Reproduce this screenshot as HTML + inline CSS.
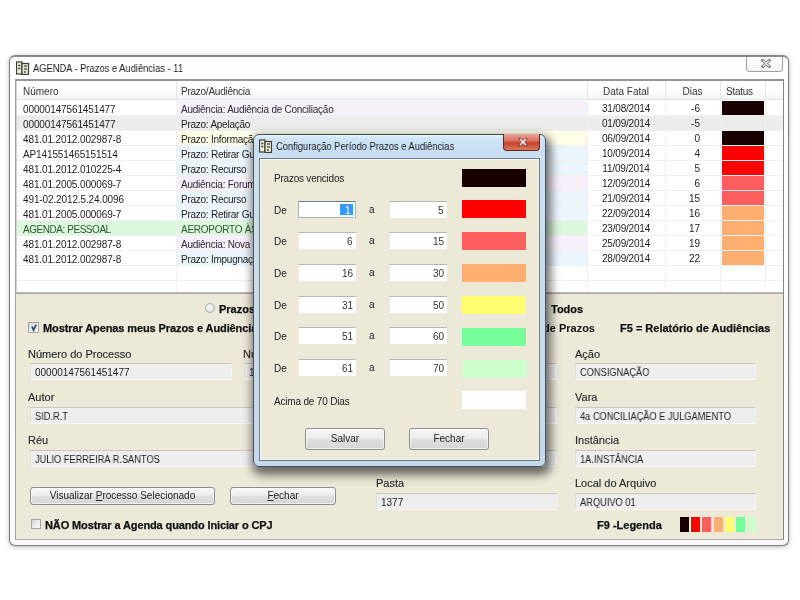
<!DOCTYPE html>
<html><head><meta charset="utf-8"><style>
html,body{margin:0;padding:0;}
body{width:800px;height:600px;overflow:hidden;background:#fff;position:relative;font-family:"Liberation Sans",sans-serif;}
div{position:absolute;box-sizing:border-box;}
.t{white-space:nowrap;will-change:transform;}
</style></head><body>
<div style="left:9px;top:55px;width:780px;height:491px;border:1px solid #7d7d7d;border-top:2px solid #8a8a8a;border-radius:6px;background:linear-gradient(#fdfdfd,#ffffff 30px,#f8f8f8);box-shadow:0 1px 5px rgba(0,0,0,0.28);"></div>
<div style="left:746px;top:57px;width:37px;height:15px;border:1px solid #a0a0a0;border-top:none;border-radius:0 0 4px 4px;background:linear-gradient(#ffffff,#f4f4f4);"><svg style="position:absolute;left:14px;top:2px" width="10" height="9" viewBox="0 0 10 9"><path d="M1.8 1.5 L8.2 7.5 M8.2 1.5 L1.8 7.5" stroke="#6e6e78" stroke-width="2.9" stroke-linecap="square"/><path d="M1.8 1.5 L8.2 7.5 M8.2 1.5 L1.8 7.5" stroke="#f4f4f4" stroke-width="1.1"/></svg></div>
<div style="left:16px;top:61px;width:14px;height:14px;"><svg width="14" height="14" viewBox="0 0 14 14"><rect x="0.5" y="1" width="5.5" height="12" fill="#eef0e4" stroke="#3c3c30" stroke-width="1.2"/><rect x="6" y="2.5" width="6.5" height="11" fill="#e6ead8" stroke="#3c3c30" stroke-width="1.2"/><path d="M2 4.5h2.5M2 7.5h2.5M8 5h3M8 8h3M8 11h2" stroke="#5a5a48" stroke-width="1.3"/></svg></div>
<div class="t" style="left:33px;top:62px;font-size:10.5px;line-height:12.5px;font-weight:normal;color:#1a1a1a;transform:scaleX(0.89);transform-origin:0 0;">AGENDA - Prazos e Audiências - 11</div>
<div style="left:15px;top:79px;width:769px;height:461px;background:#ECE9D8;border-top:2px solid #969696;border-left:1px solid #a0a0a0;border-right:1px solid #858585;border-bottom:1px solid #a8a8a8;"></div>
<div style="left:16px;top:81px;width:767px;height:212px;background:#fff;"></div>
<div style="left:16px;top:81px;width:767px;height:19px;background:linear-gradient(#ffffff,#ffffff 50%,#f3f4f6);border-bottom:1px solid #e3e6ea;"></div>
<div style="left:176px;top:81px;width:1px;height:18px;background:#e4e7eb;"></div>
<div style="left:587px;top:81px;width:1px;height:18px;background:#e4e7eb;"></div>
<div style="left:665px;top:81px;width:1px;height:18px;background:#e4e7eb;"></div>
<div style="left:720px;top:81px;width:1px;height:18px;background:#e4e7eb;"></div>
<div style="left:765px;top:81px;width:1px;height:18px;background:#e4e7eb;"></div>
<div class="t" style="left:23px;top:86px;font-size:10px;line-height:12px;font-weight:normal;color:#333;">Número</div>
<div class="t" style="left:181px;top:86px;font-size:10px;line-height:12px;font-weight:normal;color:#333;letter-spacing:-0.25px;">Prazo/Audiência</div>
<div class="t" style="left:587px;top:86px;width:78px;text-align:center;font-size:10px;line-height:12px;color:#333">Data Fatal</div>
<div class="t" style="left:665px;top:86px;width:55px;text-align:center;font-size:10px;line-height:12px;color:#333">Dias</div>
<div class="t" style="left:726px;top:86px;font-size:10px;line-height:12px;font-weight:normal;color:#333;letter-spacing:-0.25px;">Status</div>
<div style="left:176px;top:101px;width:411px;height:14px;background:#F5F1FB;"></div>
<div style="left:16px;top:115px;width:767px;height:1px;background:#f0f0f0;"></div>
<div class="t" style="left:23px;top:104px;font-size:10px;line-height:12px;font-weight:normal;color:#1e1e1e;letter-spacing:-0.12px;">00000147561451477</div>
<div class="t" style="left:181px;top:104px;font-size:10px;line-height:12px;font-weight:normal;color:#302838;letter-spacing:-0.25px;">Audiência: Audiência de Conciliação</div>
<div class="t" style="left:587px;top:103px;width:78px;text-align:center;font-size:10px;line-height:12px;color:#1e1e1e;letter-spacing:-0.2px">31/08/2014</div>
<div class="t" style="left:640px;top:103px;width:60px;text-align:right;font-size:10px;line-height:12px;color:#1e1e1e">-6</div>
<div style="left:722px;top:101px;width:42px;height:14px;background:#180000;"></div>
<div style="left:16px;top:116px;width:767px;height:14px;background:#ececec;"></div>
<div style="left:16px;top:130px;width:767px;height:1px;background:#f0f0f0;"></div>
<div class="t" style="left:23px;top:119px;font-size:10px;line-height:12px;font-weight:normal;color:#1e1e1e;letter-spacing:-0.12px;">00000147561451477</div>
<div class="t" style="left:181px;top:119px;font-size:10px;line-height:12px;font-weight:normal;color:#1e1e1e;letter-spacing:-0.25px;">Prazo: Apelação</div>
<div class="t" style="left:587px;top:118px;width:78px;text-align:center;font-size:10px;line-height:12px;color:#1e1e1e;letter-spacing:-0.2px">01/09/2014</div>
<div class="t" style="left:640px;top:118px;width:60px;text-align:right;font-size:10px;line-height:12px;color:#1e1e1e">-5</div>
<div style="left:176px;top:131px;width:411px;height:14px;background:#FFFDE8;"></div>
<div style="left:16px;top:145px;width:767px;height:1px;background:#f0f0f0;"></div>
<div class="t" style="left:23px;top:134px;font-size:10px;line-height:12px;font-weight:normal;color:#1e1e1e;letter-spacing:-0.12px;">481.01.2012.002987-8</div>
<div class="t" style="left:181px;top:134px;font-size:10px;line-height:12px;font-weight:normal;color:#1e1e1e;letter-spacing:-0.25px;">Prazo: Informação</div>
<div class="t" style="left:587px;top:133px;width:78px;text-align:center;font-size:10px;line-height:12px;color:#1e1e1e;letter-spacing:-0.2px">06/09/2014</div>
<div class="t" style="left:640px;top:133px;width:60px;text-align:right;font-size:10px;line-height:12px;color:#1e1e1e">0</div>
<div style="left:722px;top:131px;width:42px;height:14px;background:#180000;"></div>
<div style="left:176px;top:146px;width:411px;height:14px;background:#EAF5FC;"></div>
<div style="left:16px;top:160px;width:767px;height:1px;background:#f0f0f0;"></div>
<div class="t" style="left:23px;top:149px;font-size:10px;line-height:12px;font-weight:normal;color:#1e1e1e;letter-spacing:-0.12px;">AP141551465151514</div>
<div class="t" style="left:181px;top:149px;font-size:10px;line-height:12px;font-weight:normal;color:#1e1e1e;letter-spacing:-0.25px;">Prazo: Retirar Guia</div>
<div class="t" style="left:587px;top:148px;width:78px;text-align:center;font-size:10px;line-height:12px;color:#1e1e1e;letter-spacing:-0.2px">10/09/2014</div>
<div class="t" style="left:640px;top:148px;width:60px;text-align:right;font-size:10px;line-height:12px;color:#1e1e1e">4</div>
<div style="left:722px;top:146px;width:42px;height:14px;background:#FF0000;"></div>
<div style="left:176px;top:161px;width:411px;height:14px;background:#EAF5FC;"></div>
<div style="left:16px;top:175px;width:767px;height:1px;background:#f0f0f0;"></div>
<div class="t" style="left:23px;top:164px;font-size:10px;line-height:12px;font-weight:normal;color:#1e1e1e;letter-spacing:-0.12px;">481.01.2012.010225-4</div>
<div class="t" style="left:181px;top:164px;font-size:10px;line-height:12px;font-weight:normal;color:#1e1e1e;letter-spacing:-0.25px;">Prazo: Recurso</div>
<div class="t" style="left:587px;top:163px;width:78px;text-align:center;font-size:10px;line-height:12px;color:#1e1e1e;letter-spacing:-0.2px">11/09/2014</div>
<div class="t" style="left:640px;top:163px;width:60px;text-align:right;font-size:10px;line-height:12px;color:#1e1e1e">5</div>
<div style="left:722px;top:161px;width:42px;height:14px;background:#FF0000;"></div>
<div style="left:176px;top:176px;width:411px;height:14px;background:#F7F0FB;"></div>
<div style="left:16px;top:190px;width:767px;height:1px;background:#f0f0f0;"></div>
<div class="t" style="left:23px;top:179px;font-size:10px;line-height:12px;font-weight:normal;color:#1e1e1e;letter-spacing:-0.12px;">481.01.2005.000069-7</div>
<div class="t" style="left:181px;top:179px;font-size:10px;line-height:12px;font-weight:normal;color:#302838;letter-spacing:-0.25px;">Audiência: Forum</div>
<div class="t" style="left:587px;top:178px;width:78px;text-align:center;font-size:10px;line-height:12px;color:#1e1e1e;letter-spacing:-0.2px">12/09/2014</div>
<div class="t" style="left:640px;top:178px;width:60px;text-align:right;font-size:10px;line-height:12px;color:#1e1e1e">6</div>
<div style="left:722px;top:176px;width:42px;height:14px;background:#FF5E5E;"></div>
<div style="left:176px;top:191px;width:411px;height:14px;background:#EAF5FC;"></div>
<div style="left:16px;top:205px;width:767px;height:1px;background:#f0f0f0;"></div>
<div class="t" style="left:23px;top:194px;font-size:10px;line-height:12px;font-weight:normal;color:#1e1e1e;letter-spacing:-0.12px;">491-02.2012.5.24.0096</div>
<div class="t" style="left:181px;top:194px;font-size:10px;line-height:12px;font-weight:normal;color:#1e1e1e;letter-spacing:-0.25px;">Prazo: Recurso</div>
<div class="t" style="left:587px;top:193px;width:78px;text-align:center;font-size:10px;line-height:12px;color:#1e1e1e;letter-spacing:-0.2px">21/09/2014</div>
<div class="t" style="left:640px;top:193px;width:60px;text-align:right;font-size:10px;line-height:12px;color:#1e1e1e">15</div>
<div style="left:722px;top:191px;width:42px;height:14px;background:#FF5E5E;"></div>
<div style="left:176px;top:206px;width:411px;height:14px;background:#EAF5FC;"></div>
<div style="left:16px;top:220px;width:767px;height:1px;background:#f0f0f0;"></div>
<div class="t" style="left:23px;top:209px;font-size:10px;line-height:12px;font-weight:normal;color:#1e1e1e;letter-spacing:-0.12px;">481.01.2005.000069-7</div>
<div class="t" style="left:181px;top:209px;font-size:10px;line-height:12px;font-weight:normal;color:#1e1e1e;letter-spacing:-0.25px;">Prazo: Retirar Guia</div>
<div class="t" style="left:587px;top:208px;width:78px;text-align:center;font-size:10px;line-height:12px;color:#1e1e1e;letter-spacing:-0.2px">22/09/2014</div>
<div class="t" style="left:640px;top:208px;width:60px;text-align:right;font-size:10px;line-height:12px;color:#1e1e1e">16</div>
<div style="left:722px;top:206px;width:42px;height:14px;background:#FFB070;"></div>
<div style="left:16px;top:221px;width:571px;height:14px;background:#dcf8dc;"></div>
<div style="left:16px;top:235px;width:767px;height:1px;background:#f0f0f0;"></div>
<div class="t" style="left:23px;top:224px;font-size:10px;line-height:12px;font-weight:normal;color:#2f5530;letter-spacing:-0.45px;">AGENDA: PESSOAL</div>
<div class="t" style="left:181px;top:224px;font-size:10px;line-height:12px;font-weight:normal;color:#2f5530;letter-spacing:-0.25px;">AEROPORTO ÀS</div>
<div class="t" style="left:587px;top:223px;width:78px;text-align:center;font-size:10px;line-height:12px;color:#1e1e1e;letter-spacing:-0.2px">23/09/2014</div>
<div class="t" style="left:640px;top:223px;width:60px;text-align:right;font-size:10px;line-height:12px;color:#1e1e1e">17</div>
<div style="left:722px;top:221px;width:42px;height:14px;background:#FFB070;"></div>
<div style="left:176px;top:236px;width:411px;height:14px;background:#F7F0FB;"></div>
<div style="left:16px;top:250px;width:767px;height:1px;background:#f0f0f0;"></div>
<div class="t" style="left:23px;top:239px;font-size:10px;line-height:12px;font-weight:normal;color:#1e1e1e;letter-spacing:-0.12px;">481.01.2012.002987-8</div>
<div class="t" style="left:181px;top:239px;font-size:10px;line-height:12px;font-weight:normal;color:#302838;letter-spacing:-0.25px;">Audiência: Nova</div>
<div class="t" style="left:587px;top:238px;width:78px;text-align:center;font-size:10px;line-height:12px;color:#1e1e1e;letter-spacing:-0.2px">25/09/2014</div>
<div class="t" style="left:640px;top:238px;width:60px;text-align:right;font-size:10px;line-height:12px;color:#1e1e1e">19</div>
<div style="left:722px;top:236px;width:42px;height:14px;background:#FFB070;"></div>
<div style="left:176px;top:251px;width:411px;height:14px;background:#EAF5FC;"></div>
<div style="left:16px;top:265px;width:767px;height:1px;background:#f0f0f0;"></div>
<div class="t" style="left:23px;top:254px;font-size:10px;line-height:12px;font-weight:normal;color:#1e1e1e;letter-spacing:-0.12px;">481.01.2012.002987-8</div>
<div class="t" style="left:181px;top:254px;font-size:10px;line-height:12px;font-weight:normal;color:#1e1e1e;letter-spacing:-0.25px;">Prazo: Impugnação</div>
<div class="t" style="left:587px;top:253px;width:78px;text-align:center;font-size:10px;line-height:12px;color:#1e1e1e;letter-spacing:-0.2px">28/09/2014</div>
<div class="t" style="left:640px;top:253px;width:60px;text-align:right;font-size:10px;line-height:12px;color:#1e1e1e">22</div>
<div style="left:722px;top:251px;width:42px;height:14px;background:#FFB070;"></div>
<div style="left:16px;top:280px;width:767px;height:1px;background:#f0f0f0;"></div>
<div style="left:176px;top:100px;width:1px;height:193px;background:#f0f0f0;"></div>
<div style="left:587px;top:100px;width:1px;height:193px;background:#f0f0f0;"></div>
<div style="left:665px;top:100px;width:1px;height:193px;background:#f0f0f0;"></div>
<div style="left:720px;top:100px;width:1px;height:193px;background:#f0f0f0;"></div>
<div style="left:765px;top:100px;width:1px;height:193px;background:#f0f0f0;"></div>
<div style="left:16px;top:81px;width:1px;height:212px;background:#d4d4d4;"></div>
<div style="left:16px;top:292px;width:767px;height:2px;background:linear-gradient(#c8c8c8,#9a9a9a);"></div>
<div style="left:205px;top:303px;width:10px;height:10px;border-radius:50%;border:1px solid #b0b0b0;background:radial-gradient(circle at 40% 40%,#ffffff,#dcdcdc 70%,#c8c8c8);"></div>
<div class="t" style="left:219px;top:303px;font-size:11px;line-height:13px;font-weight:bold;color:#111;-webkit-text-stroke:0.25px #111;">Prazos</div>
<div class="t" style="left:551px;top:303px;font-size:11px;line-height:13px;font-weight:bold;color:#111;-webkit-text-stroke:0.25px #111;">Todos</div>
<div style="left:28px;top:322px;width:11px;height:11px;border:1px solid #a4a4a4;background:linear-gradient(135deg,#d0d4dc,#eef0f4 60%,#fafafa);"><svg style="position:absolute;left:0px;top:0px" width="9" height="9" viewBox="0 0 9 9"><path d="M3 3.5 L4.6 7.2 L7.2 1.6" stroke="#3a4866" stroke-width="1.7" fill="none"/></svg></div>
<div class="t" style="left:43px;top:322px;font-size:11px;line-height:13px;font-weight:bold;color:#111;-webkit-text-stroke:0.25px #111;letter-spacing:-0.1px;">Mostrar Apenas meus Prazos e Audiências</div>
<div class="t" style="left:395px;top:322px;width:200px;text-align:right;font-size:11px;line-height:13px;font-weight:bold;color:#111">F4 = Relatório de Prazos</div>
<div class="t" style="left:620px;top:322px;font-size:11px;line-height:13px;font-weight:bold;color:#111;-webkit-text-stroke:0.25px #111;">F5 = Relatório de Audiências</div>
<div class="t" style="left:28px;top:348px;font-size:11px;line-height:13px;font-weight:normal;color:#2a2a2a;-webkit-text-stroke:0.15px #2a2a2a;">Número do Processo</div>
<div class="t" style="left:243px;top:348px;font-size:11px;line-height:13px;font-weight:normal;color:#2a2a2a;-webkit-text-stroke:0.15px #2a2a2a;">Número</div>
<div class="t" style="left:575px;top:348px;font-size:11px;line-height:13px;font-weight:normal;color:#2a2a2a;-webkit-text-stroke:0.15px #2a2a2a;">Ação</div>
<div style="left:30px;top:363px;width:202px;height:17px;background:#EEEEEE;border-top:1px solid #c9c7bc;border-left:1px solid #e2e0d6;border-bottom:1px solid #f8f8f4;border-right:1px solid #f4f4f0;"><div class="t" style="left:4px;top:3px;font-size:10px;line-height:12px;color:#222;letter-spacing:0;">00000147561451477</div></div>
<div style="left:244px;top:363px;width:313px;height:17px;background:#EEEEEE;border-top:1px solid #c9c7bc;border-left:1px solid #e2e0d6;border-bottom:1px solid #f8f8f4;border-right:1px solid #f4f4f0;"><div class="t" style="left:4px;top:3px;font-size:10px;line-height:12px;color:#222;letter-spacing:0;">1</div></div>
<div style="left:575px;top:363px;width:181px;height:17px;background:#EEEEEE;border-top:1px solid #c9c7bc;border-left:1px solid #e2e0d6;border-bottom:1px solid #f8f8f4;border-right:1px solid #f4f4f0;"><div class="t" style="left:4px;top:3px;font-size:10px;line-height:12px;color:#222;letter-spacing:0;transform:scaleX(0.925);transform-origin:0 0;">CONSIGNAÇÃO</div></div>
<div class="t" style="left:28px;top:391px;font-size:11px;line-height:13px;font-weight:normal;color:#2a2a2a;-webkit-text-stroke:0.15px #2a2a2a;">Autor</div>
<div class="t" style="left:575px;top:391px;font-size:11px;line-height:13px;font-weight:normal;color:#2a2a2a;-webkit-text-stroke:0.15px #2a2a2a;">Vara</div>
<div style="left:30px;top:407px;width:527px;height:17px;background:#EEEEEE;border-top:1px solid #c9c7bc;border-left:1px solid #e2e0d6;border-bottom:1px solid #f8f8f4;border-right:1px solid #f4f4f0;"><div class="t" style="left:4px;top:3px;font-size:10px;line-height:12px;color:#222;letter-spacing:0;transform:scaleX(0.925);transform-origin:0 0;">SID.R.T</div></div>
<div style="left:575px;top:407px;width:181px;height:17px;background:#EEEEEE;border-top:1px solid #c9c7bc;border-left:1px solid #e2e0d6;border-bottom:1px solid #f8f8f4;border-right:1px solid #f4f4f0;"><div class="t" style="left:4px;top:3px;font-size:10px;line-height:12px;color:#222;letter-spacing:0;transform:scaleX(0.925);transform-origin:0 0;">4a CONCILIAÇÃO E JULGAMENTO</div></div>
<div class="t" style="left:28px;top:434px;font-size:11px;line-height:13px;font-weight:normal;color:#2a2a2a;-webkit-text-stroke:0.15px #2a2a2a;">Réu</div>
<div class="t" style="left:575px;top:434px;font-size:11px;line-height:13px;font-weight:normal;color:#2a2a2a;-webkit-text-stroke:0.15px #2a2a2a;">Instância</div>
<div style="left:30px;top:450px;width:527px;height:17px;background:#EEEEEE;border-top:1px solid #c9c7bc;border-left:1px solid #e2e0d6;border-bottom:1px solid #f8f8f4;border-right:1px solid #f4f4f0;"><div class="t" style="left:4px;top:3px;font-size:10px;line-height:12px;color:#222;letter-spacing:0;transform:scaleX(0.925);transform-origin:0 0;">JULIO FERREIRA R.SANTOS</div></div>
<div style="left:575px;top:450px;width:181px;height:17px;background:#EEEEEE;border-top:1px solid #c9c7bc;border-left:1px solid #e2e0d6;border-bottom:1px solid #f8f8f4;border-right:1px solid #f4f4f0;"><div class="t" style="left:4px;top:3px;font-size:10px;line-height:12px;color:#222;letter-spacing:0;transform:scaleX(0.925);transform-origin:0 0;">1A.INSTÂNCIA</div></div>
<div class="t" style="left:376px;top:477px;font-size:11px;line-height:13px;font-weight:normal;color:#2a2a2a;-webkit-text-stroke:0.15px #2a2a2a;">Pasta</div>
<div class="t" style="left:575px;top:477px;font-size:11px;line-height:13px;font-weight:normal;color:#2a2a2a;-webkit-text-stroke:0.15px #2a2a2a;">Local do Arquivo</div>
<div style="left:376px;top:493px;width:182px;height:17px;background:#EEEEEE;border-top:1px solid #c9c7bc;border-left:1px solid #e2e0d6;border-bottom:1px solid #f8f8f4;border-right:1px solid #f4f4f0;"><div class="t" style="left:4px;top:3px;font-size:10px;line-height:12px;color:#222;letter-spacing:0;">1377</div></div>
<div style="left:575px;top:493px;width:181px;height:17px;background:#EEEEEE;border-top:1px solid #c9c7bc;border-left:1px solid #e2e0d6;border-bottom:1px solid #f8f8f4;border-right:1px solid #f4f4f0;"><div class="t" style="left:4px;top:3px;font-size:10px;line-height:12px;color:#222;letter-spacing:0;transform:scaleX(0.925);transform-origin:0 0;">ARQUIVO 01</div></div>
<div style="left:30px;top:487px;width:185px;height:18px;border:1px solid #8e8f8f;border-radius:3px;background:linear-gradient(#f7f7f7,#ececec 45%,#dedede 55%,#d6d6d6);box-shadow:inset 0 0 0 1px rgba(255,255,255,0.6);"><div class="t" style="left:0;top:0;width:100%;height:100%;text-align:center;font-size:10px;line-height:16px;color:#222">Visualizar <u>P</u>rocesso Selecionado</div></div>
<div style="left:230px;top:487px;width:106px;height:18px;border:1px solid #8e8f8f;border-radius:3px;background:linear-gradient(#f7f7f7,#ececec 45%,#dedede 55%,#d6d6d6);box-shadow:inset 0 0 0 1px rgba(255,255,255,0.6);"><div class="t" style="left:0;top:0;width:100%;height:100%;text-align:center;font-size:10px;line-height:16px;color:#222"><u>F</u>echar</div></div>
<div style="left:31px;top:519px;width:10px;height:10px;border:1px solid #a4a4a4;background:linear-gradient(135deg,#d0d4dc,#eef0f4 60%,#fafafa);"></div>
<div class="t" style="left:45px;top:519px;font-size:11px;line-height:13px;font-weight:bold;color:#111;-webkit-text-stroke:0.25px #111;letter-spacing:-0.12px;">NÃO Mostrar a Agenda quando Iniciar o CPJ</div>
<div class="t" style="left:597px;top:519px;font-size:11px;line-height:13px;font-weight:bold;color:#111;-webkit-text-stroke:0.25px #111;">F9 -Legenda</div>
<div style="left:680px;top:517px;width:9px;height:15px;background:#180000;"></div>
<div style="left:691px;top:517px;width:9px;height:15px;background:#FF0000;"></div>
<div style="left:702px;top:517px;width:9px;height:15px;background:#FF5E5E;"></div>
<div style="left:714px;top:517px;width:9px;height:15px;background:#FFB070;"></div>
<div style="left:725px;top:517px;width:9px;height:15px;background:#FFFF70;"></div>
<div style="left:736px;top:517px;width:9px;height:15px;background:#77FF99;"></div>
<div style="left:747px;top:517px;width:9px;height:15px;background:#CCFFCC;"></div>
<div style="left:253px;top:134px;width:293px;height:333px;border:1px solid #46525e;border-radius:6px;background:linear-gradient(#e2f0fb,#d0e4f6 4px,#c6ddf3 16px,#cde0f0 23px,#c4d8ec);box-shadow:2px 5px 10px 3px rgba(0,0,0,0.55);"></div>
<div style="left:503px;top:134px;width:37px;height:17px;border:1px solid #5a2a22;border-top:none;border-radius:0 0 4px 4px;background:linear-gradient(#e8a89c,#d86c5c 45%,#c8402c 55%,#d87a60);"><svg style="position:absolute;left:14px;top:3px" width="10" height="10" viewBox="0 0 10 10"><path d="M2 2 L8 8 M8 2 L2 8" stroke="#8a4038" stroke-width="2.6" stroke-linecap="square"/><path d="M2 2 L8 8 M8 2 L2 8" stroke="#ffffff" stroke-width="1.4"/></svg></div>
<div style="left:259px;top:139px;width:14px;height:14px;"><svg width="14" height="14" viewBox="0 0 14 14"><rect x="0.5" y="1" width="5.5" height="12" fill="#eef0e4" stroke="#3c3c30" stroke-width="1.2"/><rect x="6" y="2.5" width="6.5" height="11" fill="#e6ead8" stroke="#3c3c30" stroke-width="1.2"/><path d="M2 4.5h2.5M2 7.5h2.5M8 5h3M8 8h3M8 11h2" stroke="#5a5a48" stroke-width="1.3"/></svg></div>
<div class="t" style="left:276px;top:140px;font-size:10.5px;line-height:12.5px;font-weight:normal;color:#1a1a1a;transform:scaleX(0.89);transform-origin:0 0;">Configuração Período Prazos e Audiências</div>
<div style="left:259px;top:158px;width:281px;height:303px;background:#ECE9D8;border:1px solid #6c7884;box-shadow:inset 1px 1px 0 #f8f8f4,inset -1px -1px 0 #f4f4f0;"></div>
<div class="t" style="left:274px;top:173px;font-size:10px;line-height:12px;font-weight:normal;color:#222;letter-spacing:-0.22px;">Prazos vencidos</div>
<div style="left:462px;top:169px;width:64px;height:18px;background:#180000;"></div>
<div class="t" style="left:274px;top:205px;font-size:10px;line-height:12px;font-weight:normal;color:#222;">De</div>
<div class="t" style="left:369px;top:204px;font-size:10px;line-height:12px;font-weight:normal;color:#222;">a</div>
<div style="left:298px;top:201px;width:58px;height:17px;background:#fff;border:1px solid #a8b8c8;border-top:1px solid #6a7a8a;"><div style="left:41px;top:2px;width:13px;height:11px;background:#3399ff;"></div><div class="t" style="right:4px;top:3px;font-size:10px;line-height:12px;color:#fff">1</div></div>
<div style="left:389px;top:201px;width:58px;height:17px;background:#fff;border-top:1px solid #b8b8b0;border-left:1px solid #e8e8e0;"><div class="t" style="right:3px;top:3px;font-size:10px;line-height:12px;color:#333">5</div></div>
<div style="left:462px;top:200px;width:64px;height:18px;background:#FF0000;"></div>
<div class="t" style="left:274px;top:236px;font-size:10px;line-height:12px;font-weight:normal;color:#222;">De</div>
<div class="t" style="left:369px;top:235px;font-size:10px;line-height:12px;font-weight:normal;color:#222;">a</div>
<div style="left:298px;top:232px;width:58px;height:17px;background:#fff;border-top:1px solid #b8b8b0;border-left:1px solid #e8e8e0;"><div class="t" style="right:3px;top:3px;font-size:10px;line-height:12px;color:#333">6</div></div>
<div style="left:389px;top:232px;width:58px;height:17px;background:#fff;border-top:1px solid #b8b8b0;border-left:1px solid #e8e8e0;"><div class="t" style="right:3px;top:3px;font-size:10px;line-height:12px;color:#333">15</div></div>
<div style="left:462px;top:232px;width:64px;height:18px;background:#FF5E5E;"></div>
<div class="t" style="left:274px;top:268px;font-size:10px;line-height:12px;font-weight:normal;color:#222;">De</div>
<div class="t" style="left:369px;top:267px;font-size:10px;line-height:12px;font-weight:normal;color:#222;">a</div>
<div style="left:298px;top:264px;width:58px;height:17px;background:#fff;border-top:1px solid #b8b8b0;border-left:1px solid #e8e8e0;"><div class="t" style="right:3px;top:3px;font-size:10px;line-height:12px;color:#333">16</div></div>
<div style="left:389px;top:264px;width:58px;height:17px;background:#fff;border-top:1px solid #b8b8b0;border-left:1px solid #e8e8e0;"><div class="t" style="right:3px;top:3px;font-size:10px;line-height:12px;color:#333">30</div></div>
<div style="left:462px;top:264px;width:64px;height:18px;background:#FFB070;"></div>
<div class="t" style="left:274px;top:300px;font-size:10px;line-height:12px;font-weight:normal;color:#222;">De</div>
<div class="t" style="left:369px;top:299px;font-size:10px;line-height:12px;font-weight:normal;color:#222;">a</div>
<div style="left:298px;top:296px;width:58px;height:17px;background:#fff;border-top:1px solid #b8b8b0;border-left:1px solid #e8e8e0;"><div class="t" style="right:3px;top:3px;font-size:10px;line-height:12px;color:#333">31</div></div>
<div style="left:389px;top:296px;width:58px;height:17px;background:#fff;border-top:1px solid #b8b8b0;border-left:1px solid #e8e8e0;"><div class="t" style="right:3px;top:3px;font-size:10px;line-height:12px;color:#333">50</div></div>
<div style="left:462px;top:296px;width:64px;height:18px;background:#FFFF70;"></div>
<div class="t" style="left:274px;top:331px;font-size:10px;line-height:12px;font-weight:normal;color:#222;">De</div>
<div class="t" style="left:369px;top:330px;font-size:10px;line-height:12px;font-weight:normal;color:#222;">a</div>
<div style="left:298px;top:327px;width:58px;height:17px;background:#fff;border-top:1px solid #b8b8b0;border-left:1px solid #e8e8e0;"><div class="t" style="right:3px;top:3px;font-size:10px;line-height:12px;color:#333">51</div></div>
<div style="left:389px;top:327px;width:58px;height:17px;background:#fff;border-top:1px solid #b8b8b0;border-left:1px solid #e8e8e0;"><div class="t" style="right:3px;top:3px;font-size:10px;line-height:12px;color:#333">60</div></div>
<div style="left:462px;top:328px;width:64px;height:18px;background:#77FF99;"></div>
<div class="t" style="left:274px;top:363px;font-size:10px;line-height:12px;font-weight:normal;color:#222;">De</div>
<div class="t" style="left:369px;top:362px;font-size:10px;line-height:12px;font-weight:normal;color:#222;">a</div>
<div style="left:298px;top:359px;width:58px;height:17px;background:#fff;border-top:1px solid #b8b8b0;border-left:1px solid #e8e8e0;"><div class="t" style="right:3px;top:3px;font-size:10px;line-height:12px;color:#333">61</div></div>
<div style="left:389px;top:359px;width:58px;height:17px;background:#fff;border-top:1px solid #b8b8b0;border-left:1px solid #e8e8e0;"><div class="t" style="right:3px;top:3px;font-size:10px;line-height:12px;color:#333">70</div></div>
<div style="left:462px;top:360px;width:64px;height:18px;background:#CCFFCC;"></div>
<div class="t" style="left:274px;top:396px;font-size:10px;line-height:12px;font-weight:normal;color:#222;letter-spacing:-0.18px;">Acima de 70 Dias</div>
<div style="left:462px;top:391px;width:64px;height:18px;background:#FFFFFF;"></div>
<div style="left:305px;top:428px;width:80px;height:22px;border:1px solid #8e8f8f;border-radius:3px;background:linear-gradient(#f7f7f7,#ececec 45%,#dedede 55%,#d6d6d6);box-shadow:inset 0 0 0 1px rgba(255,255,255,0.6);"><div class="t" style="left:0;top:0;width:100%;height:100%;text-align:center;font-size:10px;line-height:20px;color:#222">Salvar</div></div>
<div style="left:409px;top:428px;width:80px;height:22px;border:1px solid #8e8f8f;border-radius:3px;background:linear-gradient(#f7f7f7,#ececec 45%,#dedede 55%,#d6d6d6);box-shadow:inset 0 0 0 1px rgba(255,255,255,0.6);"><div class="t" style="left:0;top:0;width:100%;height:100%;text-align:center;font-size:10px;line-height:20px;color:#222">Fechar</div></div>
</body></html>
